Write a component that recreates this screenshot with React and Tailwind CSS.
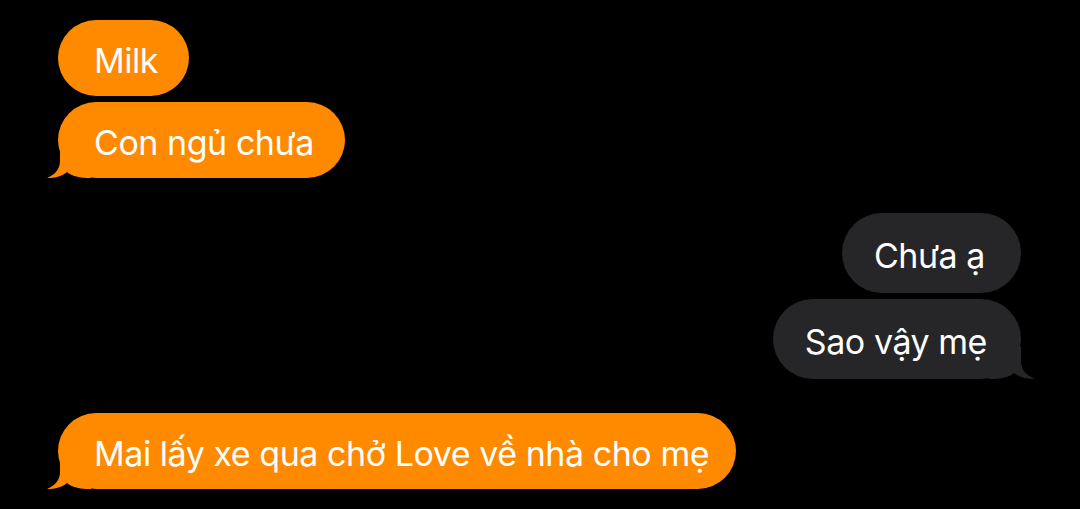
import React from 'react';

const font = { fontFamily: 'Inter, "Noto Sans", sans-serif' };

function Tail({ side, color }) {
  // small curled tail under the last bubble of a group
  if (side === 'left') {
    return (
      <svg className="absolute -left-[11px] bottom-0" width="44" height="32" viewBox="0 0 44 32">
        <path d="M13 0 L13 15 C13 24 7 29 0 32 C9 32 15 30 20 26 C25 30 32 32 44 32 L44 0 Z" fill={color} />
      </svg>
    );
  }
  return (
    <svg className="absolute -right-[14px] bottom-0" width="46" height="32" viewBox="0 0 46 32">
      <path d="M32 0 L32 15 C32 24 39 29 46 32 C37 32 30 30 25 26 C20 30 13 32 0 32 L0 0 Z" fill={color} />
    </svg>
  );
}

function Bubble({ side, text, tail, h = 'h-[76px]', pad = 'pl-[36px] pr-[31px]' }) {
  const orange = side === 'left';
  const color = orange ? '#ff8a00' : '#262628';
  return (
    <div className={`relative ${h} ${pad} flex items-center rounded-full ${orange ? 'bg-[#ff8a00]' : 'bg-[#262628]'}`}>
      {tail && <Tail side={side} color={color} />}
      <span className="relative text-white text-[34px] leading-none tracking-[-0.45px] pt-[5px]" style={font}>
        {text}
      </span>
    </div>
  );
}

export default function App() {
  return (
    <div className="w-[1080px] h-[509px] bg-black overflow-hidden flex flex-col pt-[20px]">
      <div className="flex flex-col items-start pl-[58px] gap-[6px]">
        <Bubble side="left" text="Milk" />
        <Bubble side="left" text="Con ngủ chưa" tail />
      </div>
      <div className="flex flex-col items-end pr-[59px] gap-[6px] mt-[35px]">
        <Bubble side="right" text="Chưa ạ" h="h-[80px]" pad="pl-[32px] pr-[36px]" />
        <Bubble side="right" text="Sao vậy mẹ" tail h="h-[80px]" pad="pl-[32px] pr-[34px]" />
      </div>
      <div className="flex flex-col items-start pl-[58px] mt-[34px]">
        <Bubble side="left" text="Mai lấy xe qua chở Love về nhà cho mẹ" tail pad="pl-[36px] pr-[27px]" />
      </div>
    </div>
  );
}
